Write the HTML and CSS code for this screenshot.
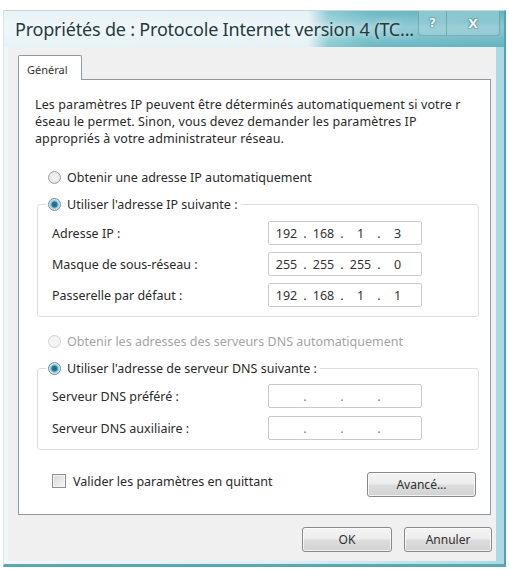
FILE: index.html
```html
<!DOCTYPE html>
<html lang="fr">
<head>
<meta charset="utf-8">
<title>Propriétés de : Protocole Internet version 4</title>
<link rel="stylesheet" href="styles.css">
</head>
<body>
<div class="window">
  <div class="titlebar">
    <div class="title">Propriétés de : Protocole Internet version 4 (TC...</div>
    <div class="caption-buttons">
      <div class="cap-btn help">?</div>
      <div class="cap-btn close">X</div>
    </div>
  </div>
  <div class="client">
    <div class="tabs"><div class="tab">Général</div></div>
    <div class="panel">
      <p class="intro"><span>Les paramètres IP peuvent être déterminés automatiquement si votre r</span><span>éseau le permet. Sinon, vous devez demander les paramètres IP</span><span>appropriés à votre administrateur réseau.</span></p>

      <div class="option first"><span class="radio"></span>Obtenir une adresse IP automatiquement</div>
      <fieldset class="group">
        <legend class="legend"><span class="radio checked"></span>Utiliser l'adresse IP suivante :</legend>
        <div class="field-row">
          <span class="label">Adresse IP :</span>
          <div class="ip"><span>192</span><i>.</i><span>168</span><i>.</i><span>1</span><i>.</i><span>3</span></div>
        </div>
        <div class="field-row">
          <span class="label">Masque de sous-réseau :</span>
          <div class="ip"><span>255</span><i>.</i><span>255</span><i>.</i><span>255</span><i>.</i><span>0</span></div>
        </div>
        <div class="field-row">
          <span class="label">Passerelle par défaut :</span>
          <div class="ip"><span>192</span><i>.</i><span>168</span><i>.</i><span>1</span><i>.</i><span>1</span></div>
        </div>
      </fieldset>

      <div class="option second disabled"><span class="radio"></span>Obtenir les adresses des serveurs DNS automatiquement</div>
      <fieldset class="group dns">
        <legend class="legend"><span class="radio checked"></span>Utiliser l'adresse de serveur DNS suivante :</legend>
        <div class="field-row">
          <span class="label">Serveur DNS préféré :</span>
          <div class="ip empty"><span></span><i>.</i><span></span><i>.</i><span></span><i>.</i><span></span></div>
        </div>
        <div class="field-row">
          <span class="label">Serveur DNS auxiliaire :</span>
          <div class="ip empty"><span></span><i>.</i><span></span><i>.</i><span></span><i>.</i><span></span></div>
        </div>
      </fieldset>

      <div class="bottom-row">
        <div class="check-option"><span class="checkbox"></span>Valider les paramètres en quittant</div>
        <button class="btn advanced">Avancé...</button>
      </div>
    </div>
    <div class="dialog-buttons">
      <button class="btn ok">OK</button>
      <button class="btn cancel">Annuler</button>
    </div>
  </div>
</div>
</body>
</html>
```

FILE: styles.css
```css
html, body {
  margin: 0;
  padding: 0;
  background: #ffffff;
}

body {
  font-family: "Noto Sans", "Open Sans", sans-serif;
  color: #2a2a2a;
}

.window {
  margin: 10px 0 0 3px;
  width: 500px;
  height: 553px;
  display: flex;
  flex-direction: column;
  border-top: 1px solid #c9d6da;
  border-left: 1px solid #d7e6ea;
  border-right: 2px solid #55a3b2;
  border-bottom: 3px solid #5aa6b4;
  background: linear-gradient(to right, #eef7fa 0%, #dcf0f5 55%, #a9dbe3 100%);
}

/* ---------- title bar ---------- */
.titlebar {
  height: 36px;
  display: flex;
  align-items: flex-start;
  background:
    linear-gradient(to bottom, rgba(255,255,255,0) 0%, rgba(255,255,255,0.28) 45%, rgba(255,255,255,0) 100%),
    linear-gradient(to right, #e8f3f7 0px, #e6f2f6 304px, #8ccbd4 324px, #6bb9c5 366px, #62b3c0 100%);
}

.title {
  flex: 1;
  padding: 7px 0 0 11px;
  font-size: 18px;
  line-height: 22px;
  letter-spacing: -0.2px;
  color: #243a42;
  white-space: nowrap;
  text-shadow: 0 0 6px rgba(255,255,255,0.9);
}

.caption-buttons {
  display: flex;
  margin-right: 4px;
}

.cap-btn {
  height: 24px;
  display: flex;
  align-items: center;
  justify-content: center;
  font-family: "DejaVu Sans", sans-serif;
  font-weight: bold;
  color: #eef8fa;
  text-shadow: 0 0 2px #3b6d78, 0 0 1px #3b6d78;
  border: 1px solid rgba(52, 110, 122, 0.35);
  border-top: none;
  background: linear-gradient(to bottom, rgba(255,255,255,0.26), rgba(255,255,255,0.08) 50%, rgba(255,255,255,0.18));
}

.cap-btn.help {
  width: 27px;
  font-size: 12px;
  border-radius: 0 0 0 4px;
}

.cap-btn.close {
  width: 52px;
  font-size: 13px;
  border-left: none;
  border-radius: 0 0 4px 0;
}

/* ---------- client area ---------- */
.client {
  flex: 1;
  margin: 0 8px 3px 4px;
  padding: 8px 5px 0 10px;
  background: #f0f0f0;
  display: flex;
  flex-direction: column;
}

.tabs {
  display: flex;
  position: relative;
  z-index: 1;
  margin-bottom: -1px;
}

.tab {
  width: 64px;
  height: 25px;
  box-sizing: border-box;
  border: 1px solid #8f9aa2;
  border-bottom: none;
  background: #ffffff;
  font-size: 11px;
  line-height: 28px;
  padding-left: 8px;
  color: #333;
  border-radius: 2px 2px 0 0;
}

.panel {
  border: 1px solid #8f9aa2;
  background: #ffffff;
  padding: 16px 11px 17px 16px;
  font-size: 12.5px;
}

.intro {
  margin: 0;
  line-height: 17px;
  white-space: nowrap;
  letter-spacing: 0.1px;
}

.intro span {
  display: block;
}

/* ---------- options ---------- */
.option {
  height: 20px;
  display: flex;
  align-items: center;
  padding-left: 13px;
  white-space: nowrap;
}

.option.first {
  margin-top: 20px;
}

.option.second {
  margin-top: 14px;
}

.option.disabled {
  color: #a4a4a4;
}

.radio {
  width: 11px;
  height: 11px;
  flex: none;
  margin-right: 6px;
  border: 1px solid #9ba3a6;
  border-radius: 50%;
  background: radial-gradient(circle, #f7f7f7 0, #e3e3e3 70%, #d0d0d0 100%);
}

.disabled .radio {
  border-color: #cfd3d4;
  background: #f4f4f4;
}

.radio.checked {
  border-color: #6a8f9c;
  background: radial-gradient(circle, #1f5f80 0, #2b7aa0 2.6px, #8cc2d8 3.6px, #e8eef0 5.5px);
}

.group {
  margin: 7px 0 0 2px;
  padding: 7px 10px 9px 14px;
  border: 1px solid #dedede;
  border-radius: 3px;
  min-width: 0;
}

.group.dns {
  padding-top: 6px;
}

.legend {
  height: 20px;
  display: flex;
  align-items: center;
  margin-left: -6px;
  padding: 0 3px 0 2px;
  white-space: nowrap;
}

.field-row {
  display: grid;
  grid-template-columns: 216px 154px;
  align-items: center;
  height: 24px;
}

.field-row + .field-row {
  margin-top: 7px;
}

.dns .field-row + .field-row {
  margin-top: 8px;
}

.label {
  white-space: nowrap;
}

.ip {
  height: 24px;
  box-sizing: border-box;
  border: 1px solid #cbcbcb;
  border-radius: 2px;
  background: #fff;
  display: grid;
  grid-template-columns: 31px 6px 31px 6px 31px 6px 31px;
  align-items: center;
  padding-left: 2px;
  color: #333;
}

.ip span {
  text-align: center;
}

.ip i {
  font-style: normal;
  text-align: center;
}

.ip.empty i {
  color: #777;
}

/* ---------- bottom row ---------- */
.bottom-row {
  margin-top: 22px;
  display: flex;
  align-items: center;
  justify-content: space-between;
  padding: 0 3px 0 17px;
}

.check-option {
  display: flex;
  align-items: center;
  white-space: nowrap;
  margin-top: -7px;
}

.checkbox {
  width: 12px;
  height: 12px;
  margin-right: 7px;
  border: 1px solid #8f8f8f;
  background: linear-gradient(to bottom right, #d7d7d7, #f7f7f7);
  box-shadow: inset 0 0 0 1px #f4f4f4;
}

.btn {
  height: 25px;
  box-sizing: border-box;
  border: 1px solid #8a8a8a;
  border-radius: 3px;
  background: linear-gradient(to bottom, #f4f4f4 0%, #ececec 48%, #dddddd 52%, #d2d2d2 100%);
  box-shadow: inset 0 0 0 1px rgba(255,255,255,0.7);
  font-family: "Noto Sans", "Open Sans", sans-serif;
  font-size: 12px;
  color: #2f2f2f;
  padding: 0;
}

.btn.advanced {
  width: 109px;
}

.dialog-buttons {
  margin-top: 12px;
  display: flex;
  justify-content: flex-end;
  gap: 12px;
  margin-right: -1px;
}

.btn.ok {
  width: 90px;
}

.btn.cancel {
  width: 88px;
}
```
